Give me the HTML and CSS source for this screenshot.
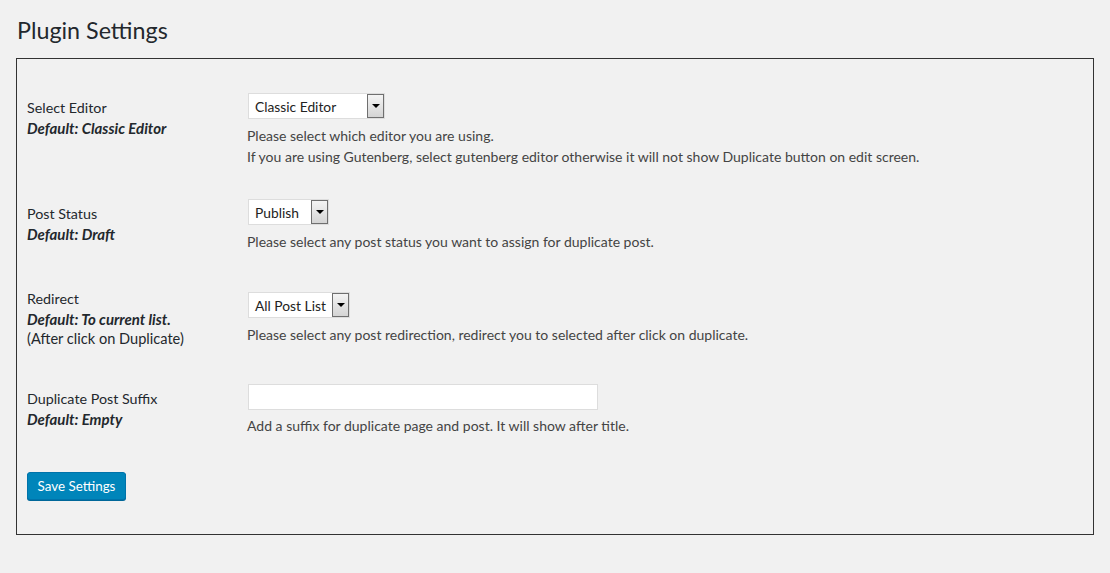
FILE: index.html
```html
<!DOCTYPE html>
<html>
<head>
<meta charset="utf-8">
<link rel="stylesheet" href="styles.css">
</head>
<body>
<div class="wrap">
  <h1 class="page-title">Plugin Settings</h1>
  <div class="settings-box">
    <div class="row row-first">
      <div class="th">
        <div>Select Editor</div>
        <div class="default">Default: Classic Editor</div>
      </div>
      <div class="td">
        <div class="select select-editor"><span class="select-text">Classic Editor</span><span class="select-btn"><i class="arrow"></i></span></div>
        <p class="description">Please select which editor you are using.<br>If you are using Gutenberg, select gutenberg editor otherwise it will not show Duplicate button on edit screen.</p>
      </div>
    </div>
    <div class="row">
      <div class="th">
        <div>Post Status</div>
        <div class="default">Default: Draft</div>
      </div>
      <div class="td">
        <div class="select select-status"><span class="select-text">Publish</span><span class="select-btn"><i class="arrow"></i></span></div>
        <p class="description">Please select any post status you want to assign for duplicate post.</p>
      </div>
    </div>
    <div class="row">
      <div class="th">
        <div>Redirect</div>
        <div class="default">Default: To current list.</div>
        <div class="note">(After click on Duplicate)</div>
      </div>
      <div class="td">
        <div class="select select-redirect"><span class="select-text">All Post List</span><span class="select-btn"><i class="arrow"></i></span></div>
        <p class="description">Please select any post redirection, redirect you to selected after click on duplicate.</p>
      </div>
    </div>
    <div class="row">
      <div class="th">
        <div>Duplicate Post Suffix</div>
        <div class="default">Default: Empty</div>
      </div>
      <div class="td">
        <div class="text-input"></div>
        <p class="description">Add a suffix for duplicate page and post. It will show after title.</p>
      </div>
    </div>
    <div class="submit">
      <button class="button-primary">Save Settings</button>
    </div>
  </div>
</div>
</body>
</html>
```
FILE: styles.css
```css
html, body {
  margin: 0;
  padding: 0;
  background: #f1f1f1;
}
body {
  font-family: "Lato", "Liberation Sans", sans-serif;
  font-size: 14px;
  color: #23282d;
}
.wrap {
  padding: 0 16px 0 16px;
}
.page-title {
  margin: 0;
  padding: 16px 0 13px 1px;
  font-size: 23.3px;
  font-weight: 400;
  line-height: 29px;
  color: #23282d;
}
.settings-box {
  border: 1px solid #333;
  padding: 18px 10px 33px 10px;
  box-sizing: border-box;
  height: 477px;
}
.row {
  display: grid;
  grid-template-columns: 221px 1fr;
  align-items: center;
}
.th {
  align-self: start;
  padding: 21px 0 19px;
  line-height: 20px;
  font-size: 14.3px;
}
.default {
  font-weight: 700;
  font-style: italic;
  font-size: 15px;
}
.note {
  font-size: 14.6px;
}
.td {
  padding: 15px 0;
}
.select {
  display: inline-flex;
  align-items: stretch;
  height: 26px;
  box-sizing: border-box;
  margin: 1px 0;
  border: 1px solid #ddd;
  background: #fff;
  vertical-align: top;
}
.select-editor { width: 137px; }
.select-status { width: 81px; }
.select-redirect { width: 102px; }
.select-text {
  flex: 1;
  padding: 1px 0 0 6px;
  line-height: 23px;
  font-size: 13.8px;
  color: #222;
}
.select-btn {
  width: 15px;
  border: 1px solid #6f6f6f;
  background: linear-gradient(#f4f4f4, #d4d4d4);
  display: flex;
  align-items: center;
  justify-content: center;
}
.arrow {
  width: 0;
  height: 0;
  border-left: 4px solid transparent;
  border-right: 4px solid transparent;
  border-top: 4px solid #000;
}
.text-input {
  width: 350px;
  height: 26px;
  box-sizing: border-box;
  margin: 1px 0;
  border: 1px solid #ddd;
  background: #fff;
}
.description {
  margin: 5px 0 0 -1px;
  padding-bottom: 1px;
  line-height: 21px;
  font-size: 14px;
  color: #444;
}
.submit {
  margin-top: 20px;
}
.button-primary {
  display: block;
  width: 99px;
  height: 28px;
  padding: 0;
  border: 1px solid #0073aa;
  border-radius: 3px;
  background: #0085ba;
  box-shadow: 0 1px 0 #006799;
  color: #fff;
  font-family: inherit;
  font-size: 13.4px;
  line-height: 27px;
  text-align: center;
}
```
